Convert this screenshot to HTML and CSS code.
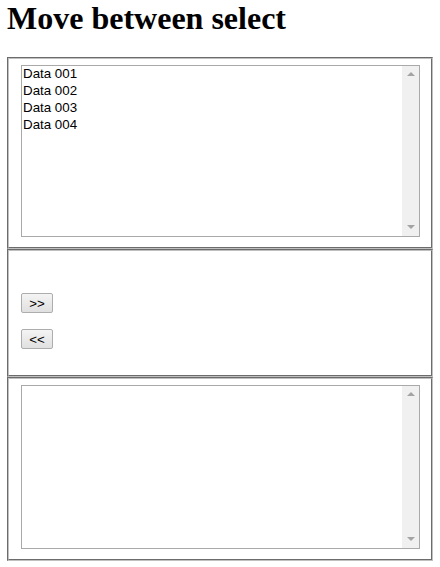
FILE: index.html
```html
<!DOCTYPE html>
<html>
<head>
<meta charset="utf-8">
<title>Move between select</title>
<link rel="stylesheet" href="styles.css">
</head>
<body>
<h1 class="title">Move between select</h1>
<fieldset class="panel">
  <div class="listbox listbox-top">
    <select class="list" multiple>
      <option>Data 001</option>
      <option>Data 002</option>
      <option>Data 003</option>
      <option>Data 004</option>
    </select>
    <div class="scrollbar"><span class="arrow up"></span><span class="arrow down"></span></div>
  </div>
</fieldset>
<fieldset class="panel panel-buttons">
  <button class="btn" type="button">&gt;&gt;</button>
  <button class="btn" type="button">&lt;&lt;</button>
</fieldset>
<fieldset class="panel">
  <div class="listbox listbox-bottom">
    <select class="list" multiple></select>
    <div class="scrollbar"><span class="arrow up"></span><span class="arrow down"></span></div>
  </div>
</fieldset>
</body>
</html>
```
FILE: styles.css
```css
html, body { margin: 0; padding: 0; background: #fff; }
body { padding: 0 7px; }
.title {
  margin: 0 0 20px 0;
  font-family: "Liberation Serif", "Times New Roman", serif;
  font-size: 32px;
  font-weight: bold;
  line-height: 37px;
  color: #000;
}
.panel {
  margin: 0;
  border: 2px groove #c0c0c0;
  padding: 6px 12px 10px;
  min-width: 0;
  display: block;
}
.listbox {
  display: flex;
  border: 1px solid #a9a9a9;
  background: #fff;
  box-sizing: border-box;
  margin-right: -1px;
}
.listbox-top { height: 172px; }
.listbox-bottom { height: 164px; }
.list {
  flex: 1;
  border: none;
  outline: none;
  margin: 0;
  padding: 0;
  overflow: hidden;
  font-family: "Liberation Sans", Arial, sans-serif;
  font-size: 13.33px;
  color: #000;
  background: #fff;
}
.list option {
  padding: 0 1px;
  line-height: 17px;
  min-height: 17px;
}
.scrollbar {
  width: 17px;
  background: #f0f0f0;
  display: flex;
  flex-direction: column;
  justify-content: space-between;
  align-items: center;
  padding: 6px 0 7px;
  box-sizing: border-box;
}
.arrow {
  width: 0;
  height: 0;
  border-left: 4px solid transparent;
  border-right: 4px solid transparent;
}
.arrow.up { border-bottom: 4px solid #a3a3a3; }
.arrow.down { border-top: 4px solid #a3a3a3; }
.panel-buttons {
  display: flex;
  flex-direction: column;
  align-items: flex-start;
  gap: 16px;
  padding: 42px 12px 26px;
}
.btn {
  width: 32px;
  height: 20px;
  margin: 0;
  padding: 0;
  border: 1px solid #adadad;
  border-radius: 2px;
  background: linear-gradient(#f4f4f4, #e0e0e0);
  font-family: "Liberation Sans", Arial, sans-serif;
  font-size: 13.33px;
  color: #000;
}
```
